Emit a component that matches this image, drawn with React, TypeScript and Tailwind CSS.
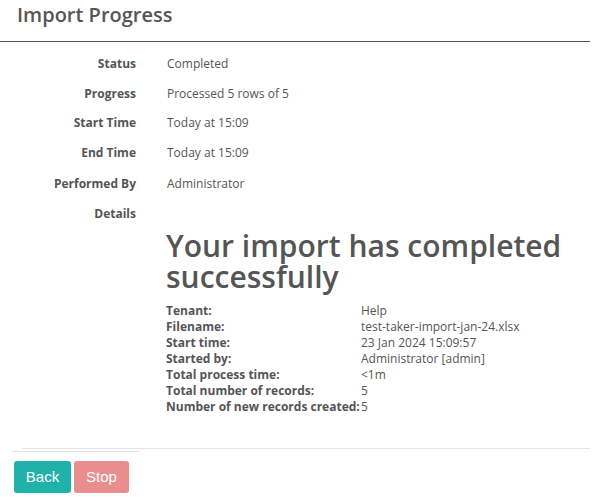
import React from "react";

const rows: [string, string][] = [
  ["Status", "Completed"],
  ["Progress", "Processed 5 rows of 5"],
  ["Start Time", "Today at 15:09"],
  ["End Time", "Today at 15:09"],
  ["Performed By", "Administrator"],
];

const details: [string, string][] = [
  ["Tenant:", "Help"],
  ["Filename:", "test-taker-import-jan-24.xlsx"],
  ["Start time:", "23 Jan 2024 15:09:57"],
  ["Started by:", "Administrator [admin]"],
  ["Total process time:", "<1m"],
  ["Total number of records:", "5"],
  ["Number of new records created:", "5"],
];

export default function App() {
  return (
    <div className="w-[600px] h-[501px] bg-white text-[#555] overflow-hidden" style={{ fontFamily: '"Open Sans", sans-serif' }}>
      <div className="w-[590px] border-b border-[#555] pl-[17px] pt-[1px] h-[42px]">
        <h1 className="text-[20px] leading-[28px] font-semibold">Import Progress</h1>
      </div>
      <div className="pt-[12px]">
        {rows.map(([l, v], i) => (
          <div key={l} className={`flex text-[12px] leading-[20px] ${i === 4 ? "h-[32px] pt-[2px]" : "h-[29.5px]"}`}>
            <div className="w-[136px] text-right font-bold">{l}</div>
            <div className="pl-[31px]">{v}</div>
          </div>
        ))}
        <div className="flex text-[12px] leading-[20px] h-[20px]">
          <div className="w-[136px] text-right font-bold">Details</div>
        </div>
        <div className="pl-[166px] pt-[6px]">
          <h2 className="text-[30px] leading-[31px] w-[420px] font-semibold">Your import has completed successfully</h2>
          <div className="mt-[11px] text-[12px] leading-[16px]">
            {details.map(([l, v]) => (
              <div key={l} className="flex">
                <div className="w-[195px] font-bold">{l}</div>
                <div>{v}</div>
              </div>
            ))}
          </div>
        </div>
      </div>
      <div className="mt-[33px] ml-[22px] w-[568px] border-t border-[#e5e5e5]"></div>
      <div className="ml-[12px] w-[128px] mt-[2px] border-t border-[#e5e5e5]"></div>
      <div className="flex gap-[3px] pl-[14px] pt-[9px]" style={{ fontFamily: '"Liberation Sans", Arial, sans-serif' }}>
        <button className="w-[57px] h-[32px] rounded-[3px] bg-[#20b2aa] text-white text-[15px]">Back</button>
        <button className="w-[55px] h-[32px] rounded-[3px] bg-[#e88e8e] text-white text-[15px]">Stop</button>
      </div>
    </div>
  );
}
